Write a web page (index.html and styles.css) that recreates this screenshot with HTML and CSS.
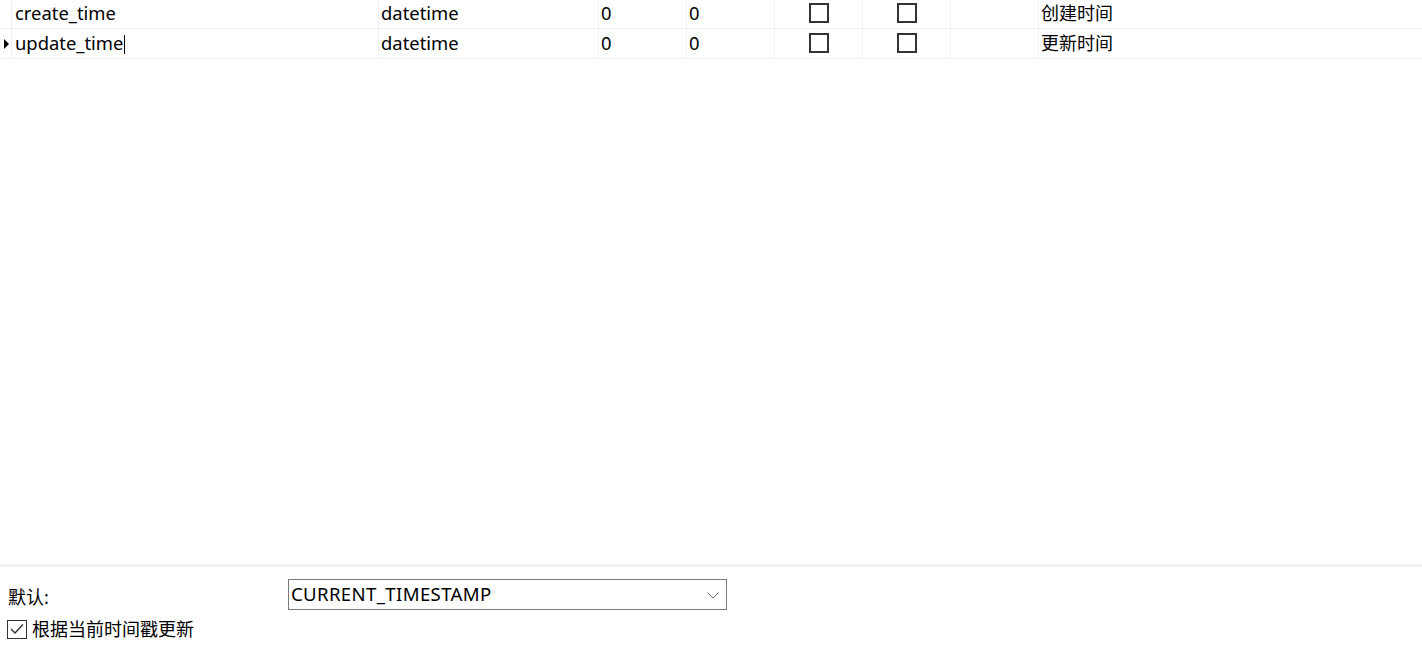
FILE: index.html
```html
<!DOCTYPE html>
<html>
<head>
<meta charset="utf-8">
<link rel="stylesheet" href="styles.css">
</head>
<body>
<div class="page">
  <div class="grid-area">
    <div class="rows">
      <div class="row first">
        <div class="cell ind"></div>
        <div class="cell c-name">create_time</div>
        <div class="cell c-type">datetime</div>
        <div class="cell c-len">0</div>
        <div class="cell c-dec">0</div>
        <div class="cell c-chk"><span class="box"></span></div>
        <div class="cell c-chk"><span class="box"></span></div>
        <div class="cell c-key"></div>
        <div class="cell c-comment">创建时间</div>
      </div>
      <div class="row">
        <div class="cell ind"><span class="arrow"></span></div>
        <div class="cell c-name"><span>update_time</span><span class="caret"></span></div>
        <div class="cell c-type">datetime</div>
        <div class="cell c-len">0</div>
        <div class="cell c-dec">0</div>
        <div class="cell c-chk"><span class="box"></span></div>
        <div class="cell c-chk"><span class="box"></span></div>
        <div class="cell c-key"></div>
        <div class="cell c-comment">更新时间</div>
      </div>
    </div>
  </div>
  <div class="splitter"></div>
  <div class="props">
    <div class="prop-row">
      <label class="prop-label">默认:</label>
      <div class="combo">
        <span class="combo-text">CURRENT_TIMESTAMP</span>
        <svg class="chev" width="12" height="7" viewBox="0 0 12 7"><path d="M0.5 0.5 L6 6 L11.5 0.5" fill="none" stroke="#6d6d6d" stroke-width="1"/></svg>
      </div>
    </div>
    <div class="check-row">
      <span class="cbox">
        <svg width="14" height="12" viewBox="0 0 14 12"><path d="M1 6 L5 10 L13 1.5" fill="none" stroke="#333" stroke-width="1.4"/></svg>
      </span>
      <span class="check-label">根据当前时间戳更新</span>
    </div>
  </div>
</div>
</body>
</html>
```
FILE: styles.css
```css
html, body {
  margin: 0;
  padding: 0;
  background: #fff;
}
body {
  font-family: "Noto Sans", "Noto Sans CJK SC", sans-serif;
  font-size: 18px;
  color: #000;
  width: 1422px;
  height: 651px;
  overflow: hidden;
}
.page {
  display: flex;
  flex-direction: column;
  height: 651px;
}
.grid-area {
  height: 564px;
  overflow: hidden;
}
.rows {
  margin-top: -1px;
}
.row {
  display: grid;
  grid-template-columns: 12px 366px 220px 88px 88px 88px 88px 88px 1fr;
  height: 30px;
  box-sizing: border-box;
  border-bottom: 1px solid #f0f0f0;
}
.cell {
  display: flex;
  align-items: center;
  padding-left: 2px;
  box-sizing: border-box;
  border-left: 1px solid #f0f0f0;
  white-space: nowrap;
  line-height: 29px;
}
.c-name, .c-type, .c-len, .c-dec {
  font-size: 18.4px;
  line-height: 24px;
  padding-bottom: 2px;
}
.cell.ind {
  border-left: none;
  padding-left: 4px;
  border-right: 1px solid #f0f0f0;
}
.row .c-name {
  border-left: none;
  padding-left: 3px;
}
.arrow {
  width: 0;
  height: 0;
  border-top: 5px solid transparent;
  border-bottom: 5px solid transparent;
  border-left: 5px solid #000;
  margin-top: 1px;
}
.caret {
  display: inline-block;
  width: 1px;
  height: 19px;
  background: #000;
  margin-left: 1px;
  margin-top: 3px;
}
.c-chk {
  justify-content: center;
  padding-left: 1px;
}
.box {
  display: block;
  width: 20px;
  height: 20px;
  box-sizing: border-box;
  border: 2px solid #333;
  margin-top: -2px;
}
.splitter {
  height: 3px;
  background: #f0f0f0;
}
.props {
  padding: 12px 0 0 8px;
  display: flex;
  flex-direction: column;
}
.prop-row {
  display: flex;
  align-items: center;
  height: 31px;
}
.prop-label {
  width: 280px;
  margin-top: 2px;
}
.combo {
  width: 439px;
  height: 31px;
  box-sizing: border-box;
  border: 1px solid #7a7a7a;
  display: flex;
  align-items: center;
  justify-content: space-between;
  padding: 0 7px 0 2px;
}
.combo-text {
  margin-top: -2px;
  font-size: 18.6px;
  letter-spacing: 0.35px;
}
.chev {
  margin-top: 1px;
}
.check-row {
  display: flex;
  align-items: center;
  margin-top: 8px;
  margin-left: -1px;
  height: 22px;
}
.cbox {
  width: 20px;
  height: 19px;
  box-sizing: border-box;
  border: 1px solid #333;
  display: flex;
  align-items: center;
  justify-content: center;
}
.check-label {
  margin-left: 5px;
  margin-top: -2px;
}
```
